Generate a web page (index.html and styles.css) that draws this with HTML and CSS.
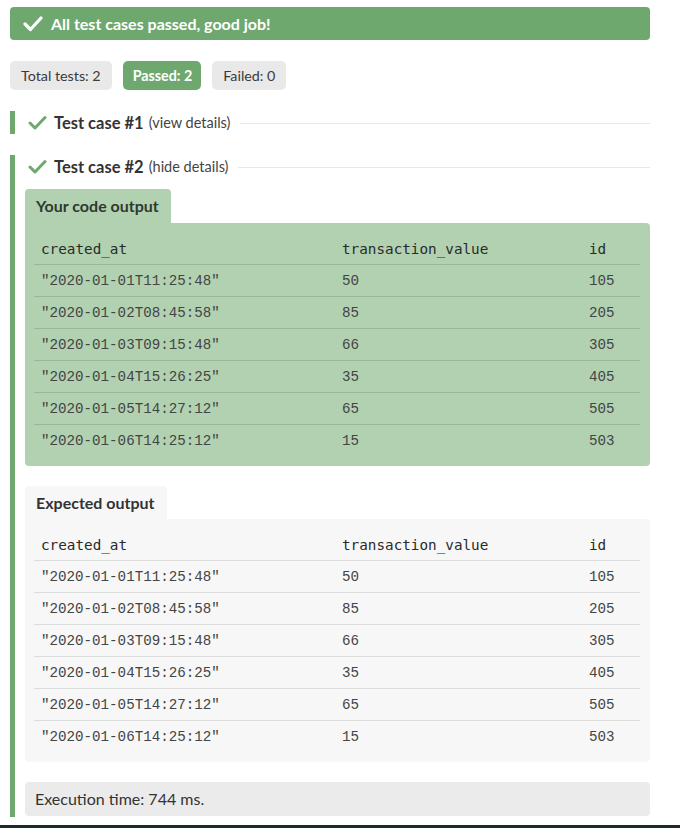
FILE: index.html
```html
<!DOCTYPE html>
<html>
<head>
<meta charset="utf-8">
<link rel="stylesheet" href="styles.css">
</head>
<body>
<div class="page">
  <div class="banner">
    <svg class="banner-check" width="20" height="17" viewBox="0 0 20 17"><path d="M2 9 L7.5 14.5 L18 3" fill="none" stroke="#fff" stroke-width="3.2" stroke-linecap="round" stroke-linejoin="round"/></svg>
    <span>All test cases passed, good job!</span>
  </div>

  <div class="badges">
    <span class="badge">Total tests: 2</span>
    <span class="badge badge-pass">Passed: 2</span>
    <span class="badge">Failed: 0</span>
  </div>

  <div class="case">
    <div class="case-head">
      <svg class="case-check" width="19" height="15" viewBox="0 0 19 15"><path d="M2 8 L7 13 L17 2.5" fill="none" stroke="#6fa86f" stroke-width="3" stroke-linecap="round" stroke-linejoin="round"/></svg>
      <span class="case-title">Test case #1</span>
      <span class="case-link">(view details)</span>
      <span class="case-rule"></span>
    </div>
  </div>

  <div class="case case-open">
    <div class="case-head">
      <svg class="case-check" width="19" height="15" viewBox="0 0 19 15"><path d="M2 8 L7 13 L17 2.5" fill="none" stroke="#6fa86f" stroke-width="3" stroke-linecap="round" stroke-linejoin="round"/></svg>
      <span class="case-title">Test case #2</span>
      <span class="case-link">(hide details)</span>
      <span class="case-rule"></span>
    </div>

    <div class="output output-green">
      <div class="tab">Your code output</div>
      <div class="panel">
        <table>
          <thead><tr><th class="c1">created_at</th><th class="c2">transaction_value</th><th class="c3">id</th></tr></thead>
          <tbody>
            <tr><td>"2020-01-01T11:25:48"</td><td>50</td><td>105</td></tr>
            <tr><td>"2020-01-02T08:45:58"</td><td>85</td><td>205</td></tr>
            <tr><td>"2020-01-03T09:15:48"</td><td>66</td><td>305</td></tr>
            <tr><td>"2020-01-04T15:26:25"</td><td>35</td><td>405</td></tr>
            <tr><td>"2020-01-05T14:27:12"</td><td>65</td><td>505</td></tr>
            <tr><td>"2020-01-06T14:25:12"</td><td>15</td><td>503</td></tr>
          </tbody>
        </table>
      </div>
    </div>

    <div class="output output-gray">
      <div class="tab">Expected output</div>
      <div class="panel">
        <table>
          <thead><tr><th class="c1">created_at</th><th class="c2">transaction_value</th><th class="c3">id</th></tr></thead>
          <tbody>
            <tr><td>"2020-01-01T11:25:48"</td><td>50</td><td>105</td></tr>
            <tr><td>"2020-01-02T08:45:58"</td><td>85</td><td>205</td></tr>
            <tr><td>"2020-01-03T09:15:48"</td><td>66</td><td>305</td></tr>
            <tr><td>"2020-01-04T15:26:25"</td><td>35</td><td>405</td></tr>
            <tr><td>"2020-01-05T14:27:12"</td><td>65</td><td>505</td></tr>
            <tr><td>"2020-01-06T14:25:12"</td><td>15</td><td>503</td></tr>
          </tbody>
        </table>
      </div>
    </div>

    <div class="exec">Execution time: 744 ms.</div>
  </div>
</div>
<div class="bottom-strip"></div>
</body>
</html>
```
FILE: styles.css
```css
html, body {
  margin: 0;
  padding: 0;
  background: #fff;
}
body {
  font-family: Lato, "Open Sans", sans-serif;
  color: #333;
  width: 680px;
  height: 828px;
  overflow: hidden;
  position: relative;
}
.page {
  padding: 7px 30px 0 10px;
  height: 818px;
  box-sizing: border-box;
}
.banner {
  height: 33px;
  background: #6fa86f;
  border-radius: 4px;
  display: flex;
  align-items: center;
  padding-left: 13px;
  color: #fff;
  font-weight: 700;
  font-size: 16px;
  margin-bottom: 21px;
}
.banner-check {
  margin-right: 8px;
  flex: none;
}
.badges {
  display: flex;
  gap: 11px;
  margin-bottom: 21px;
}
.badge {
  height: 29px;
  line-height: 29px;
  padding: 0 11px;
  border-radius: 5px;
  background: #e9e9e9;
  color: #3a3a3a;
  font-size: 14.3px;
}
.badge-pass {
  background: #6fa86f;
  color: #fff;
  font-weight: 700;
  padding: 0 9px 0 10px;
}
.case {
  border-left: 5px solid #6fa86f;
  margin-bottom: 21px;
}
.case-open {
  padding-left: 10px;
  padding-bottom: 1px;
  margin-bottom: 0;
}
.case-head {
  height: 23px;
  display: flex;
  align-items: center;
  padding-left: 13px;
}
.case-open .case-head {
  padding-left: 3px;
}
.case-check {
  flex: none;
  margin-right: 7px;
}
.case-title {
  font-weight: 700;
  font-size: 16.5px;
  color: #333;
  margin-right: 5px;
}
.case-link {
  font-size: 14.5px;
  color: #444;
}
.case-rule {
  flex: 1;
  height: 1px;
  background: #e8e8e8;
  margin-left: 10px;
  margin-top: 1px;
}
.output {
  margin-top: 11px;
}
.output + .output {
  margin-top: 20px;
}
.tab {
  display: inline-block;
  height: 34px;
  line-height: 33px;
  padding: 0 12px 0 11px;
  font-weight: 700;
  font-size: 16px;
  color: #2f3a2f;
  border-radius: 4px 4px 0 0;
  vertical-align: top;
}
.output-gray .tab {
  height: 33px;
  color: #333;
}
.panel {
  padding: 10px 10px 10px 9px;
  border-radius: 0 4px 4px 4px;
}
.output-green .tab,
.output-green .panel {
  background: #b1d1b1;
}
.output-gray .tab,
.output-gray .panel {
  background: #f7f7f7;
}
table {
  width: 100%;
  border-collapse: collapse;
  table-layout: fixed;
}
th, td {
  text-align: left;
  padding: 0 0 0 7px;
  height: 31px;
  white-space: pre;
}
th {
  font-family: "DejaVu Sans Mono", monospace;
  font-weight: 400;
  font-size: 14.3px;
  color: #2a2a2a;
}
td {
  font-family: "Liberation Mono", monospace;
  font-size: 14.2px;
  color: #444;
  border-top: 1px solid #97b797;
}
.output-gray td {
  border-top-color: #dcdcdc;
}
.c1 { width: 294px; }
.c2 { width: 240px; }
.c3 { width: auto; }
.exec {
  margin-top: 20px;
  height: 34px;
  line-height: 34px;
  background: #ebebeb;
  border-radius: 4px;
  padding-left: 10px;
  font-size: 16px;
  color: #333;
}
.bottom-strip {
  position: absolute;
  left: 0;
  right: 0;
  bottom: 0;
  height: 3px;
  background: #1f2a2a;
}
```
